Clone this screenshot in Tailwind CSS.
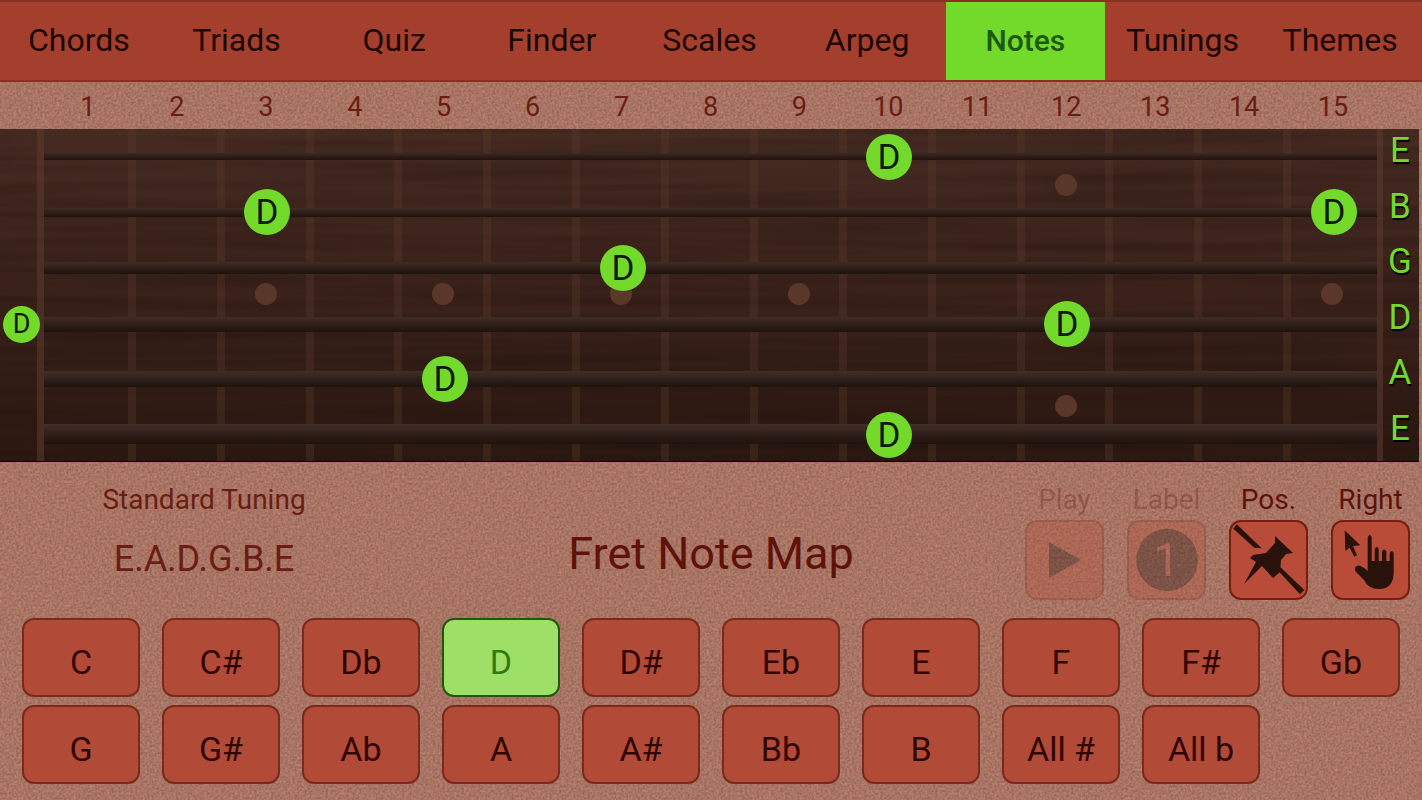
<!DOCTYPE html>
<html lang="en">
<head>
  <meta charset="UTF-8" />
  <title>Fret Note Map</title>
  <script src="https://cdn.jsdelivr.net/npm/@tailwindcss/browser@4"></script>
</head>
<body class="bg-[#a87464] font-['Roboto',sans-serif] text-[#5e120a]">
  <div class="relative w-[1422px] h-[800px] overflow-hidden">

    <!-- paper grain -->
    <svg class="absolute inset-0" width="1422" height="800">
      <filter id="grain" color-interpolation-filters="sRGB"><feTurbulence type="fractalNoise" baseFrequency="0.42" numOctaves="2" seed="4" /><feColorMatrix values="0.24 0 0 0 0.54  0.2 0 0 0 0.355  0.18 0 0 0 0.3  0 0 0 0 1" /></filter>
      <rect width="1422" height="800" filter="url(#grain)" />
    </svg>

    <div class="relative">
      <!-- top tabs -->
      <nav class="h-[82px] bg-[#a53f2d] border-y-2 border-[#8a3022] text-[32px] text-[#1c0703]">
        <div class="grid grid-cols-9 w-[1419px] text-center leading-[77px]">
          <div>Chords</div>
          <div>Triads</div>
          <div>Quiz</div>
          <div>Finder</div>
          <div>Scales</div>
          <div>Arpeg</div>
          <div class="h-[78px] mr-[-1px] bg-[#73d92b] font-medium text-[30px] text-[#1c5a0a]">Notes</div>
          <div>Tunings</div>
          <div>Themes</div>
        </div>
      </nav>

      <!-- fret numbers -->
      <div class="grid grid-cols-15 w-[1334px] ml-[43.5px] h-[47px] text-[27px] leading-[50px] text-center text-[#6a1d14]">
        <div>1</div><div>2</div><div>3</div><div>4</div><div>5</div><div>6</div><div>7</div><div>8</div><div>9</div><div>10</div><div>11</div><div>12</div><div>13</div><div>14</div><div>15</div>
      </div>

      <!-- fretboard -->
      <div class="relative h-[333px] w-[1419px] border-b border-black bg-linear-to-b from-[#452b22] via-[#3a221a] to-[#2b1811] overflow-hidden">
        <svg class="absolute inset-0" width="1419" height="333">
          <filter id="wood" color-interpolation-filters="sRGB"><feTurbulence type="fractalNoise" baseFrequency="0.003 0.09" numOctaves="2" seed="9" /><feColorMatrix values="0 0 0 0 0.08  0 0 0 0 0.03  0 0 0 0 0.02  0 0 0 0.5 -0.17" /></filter>
          <rect width="1419" height="333" filter="url(#wood)" />
        </svg>
        <div class="absolute left-[37px] top-0 bottom-0 w-[7px] bg-[#5a382c]/60"></div>
        <div class="absolute left-[1377px] top-0 bottom-0 w-[6px] bg-[#5a382c]/60"></div>

        <div class="absolute left-[47px] top-0 bottom-0 w-[1333px] grid grid-cols-15">
          <div class="border-r-8 border-[#5a382c]/35"></div><div class="border-r-8 border-[#5a382c]/35"></div><div class="border-r-8 border-[#5a382c]/35"></div>
          <div class="border-r-8 border-[#5a382c]/35"></div><div class="border-r-8 border-[#5a382c]/35"></div><div class="border-r-8 border-[#5a382c]/35"></div>
          <div class="border-r-8 border-[#5a382c]/35"></div><div class="border-r-8 border-[#5a382c]/35"></div><div class="border-r-8 border-[#5a382c]/35"></div>
          <div class="border-r-8 border-[#5a382c]/35"></div><div class="border-r-8 border-[#5a382c]/35"></div><div class="border-r-8 border-[#5a382c]/35"></div>
          <div class="border-r-8 border-[#5a382c]/35"></div><div class="border-r-8 border-[#5a382c]/35"></div><div></div>
        </div>

        <!-- inlays -->
        <div class="absolute left-[1055px] top-[45px] size-[22px] rounded-full bg-[#5b372a]"></div>
        <div class="absolute left-[255px] top-[154px] size-[22px] rounded-full bg-[#5b372a]"></div>
        <div class="absolute left-[432px] top-[154px] size-[22px] rounded-full bg-[#5b372a]"></div>
        <div class="absolute left-[610px] top-[154px] size-[22px] rounded-full bg-[#5b372a]"></div>
        <div class="absolute left-[788px] top-[154px] size-[22px] rounded-full bg-[#5b372a]"></div>
        <div class="absolute left-[1321px] top-[154px] size-[22px] rounded-full bg-[#5b372a]"></div>
        <div class="absolute left-[1055px] top-[266px] size-[22px] rounded-full bg-[#5b372a]"></div>

        <!-- strings -->
        <div class="absolute left-[44px] w-[1333px] top-[24px] h-[7px] bg-linear-to-b from-[#3c2a22] to-[#1f120d]"></div>
        <div class="absolute left-[44px] w-[1333px] top-[79px] h-[9px] bg-linear-to-b from-[#3f2c25] to-[#1f120d]"></div>
        <div class="absolute left-[44px] w-[1333px] top-[133px] h-[12px] bg-linear-to-b from-[#3f2c25] to-[#1f120d]"></div>
        <div class="absolute left-[44px] w-[1333px] top-[188px] h-[15px] bg-linear-to-b from-[#3f2c25] to-[#1f120d]"></div>
        <div class="absolute left-[44px] w-[1333px] top-[242px] h-[16px] bg-linear-to-b from-[#422e28] to-[#1f120d]"></div>
        <div class="absolute left-[44px] w-[1333px] top-[295px] h-[20px] bg-linear-to-b from-[#422e28] to-[#1f120d]"></div>

        <!-- notes -->
        <div class="absolute left-[866px] top-[5px] size-[46px] rounded-full bg-[#73d92b] text-[35px] leading-[47px] text-center text-[#0c1a04]">D</div>
        <div class="absolute left-[244px] top-[60px] size-[46px] rounded-full bg-[#73d92b] text-[35px] leading-[47px] text-center text-[#0c1a04]">D</div>
        <div class="absolute left-[1311px] top-[60px] size-[46px] rounded-full bg-[#73d92b] text-[35px] leading-[47px] text-center text-[#0c1a04]">D</div>
        <div class="absolute left-[600px] top-[116px] size-[46px] rounded-full bg-[#73d92b] text-[35px] leading-[47px] text-center text-[#0c1a04]">D</div>
        <div class="absolute left-[1044px] top-[172px] size-[46px] rounded-full bg-[#73d92b] text-[35px] leading-[47px] text-center text-[#0c1a04]">D</div>
        <div class="absolute left-[422px] top-[227px] size-[46px] rounded-full bg-[#73d92b] text-[35px] leading-[47px] text-center text-[#0c1a04]">D</div>
        <div class="absolute left-[866px] top-[283px] size-[46px] rounded-full bg-[#73d92b] text-[35px] leading-[47px] text-center text-[#0c1a04]">D</div>
        <div class="absolute left-[3px] top-[177px] size-[37px] rounded-full bg-[#73d92b] text-[27px] leading-[37px] text-center text-[#0c1a04]">D</div>

        <!-- open string names -->
        <div class="absolute left-[1382px] top-[-6px] w-[36px] text-center text-[35px] leading-[55.5px] text-[#73d92b] [text-shadow:1px_2px_1px_#000]">
          <div>E</div><div>B</div><div>G</div><div>D</div><div>A</div><div>E</div>
        </div>
      </div>

      <!-- info row -->
      <div class="flex h-[156px]">
        <div class="w-[408px] text-center text-[#6a1d14]">
          <div class="text-[28px] leading-[30px] mt-[23px]">Standard Tuning</div>
          <div class="text-[36px] leading-[40px] mt-[24px]">E.A.D.G.B.E</div>
        </div>
        <div class="w-[606px] text-center text-[45px] leading-[50px] mt-[67px]">Fret Note Map</div>
        <div class="flex pl-[11px] gap-[23px] mt-[22px]">
          <div class="w-[79px] text-center opacity-30">
            <div class="text-[28px] leading-[32px]">Play</div>
            <div class="mt-[4px] h-[80px] rounded-[12px] border-2 border-[#7a2a1c] bg-[#b84c38] flex items-center justify-center">
              <svg width="32" height="36" viewBox="0 0 32 36"><path d="M0 0L32 18L0 36Z" fill="#180805" /></svg>
            </div>
          </div>
          <div class="w-[79px] text-center opacity-30">
            <div class="text-[28px] leading-[32px]">Label</div>
            <div class="mt-[4px] h-[80px] rounded-[12px] border-2 border-[#7a2a1c] bg-[#b84c38] flex items-center justify-center">
              <div class="size-[62px] rounded-full bg-[#180805] text-[#b84c38] text-[46px] leading-[62px]">1</div>
            </div>
          </div>
          <div class="w-[79px] text-center">
            <div class="text-[28px] leading-[32px]">Pos.</div>
            <div class="mt-[4px] h-[80px] rounded-[12px] border-2 border-[#7a1c10] bg-[#b84c38]">
              <svg width="75" height="76" viewBox="0 0 75 76" fill="#2a120c">
                <path d="M5.7 2.3L2.3 6.7L23.3 25.7L30.7 26.3Z" />
                <path d="M49 44.7L49 50.7L69 72.3L73.3 68Z" />
                <path d="M44 14L62 31L55 32L50 38L49 50L42 56L31 44L13 62L25 40L19 36L22 33L35 31L44 21Z" />
              </svg>
            </div>
          </div>
          <div class="w-[79px] text-center">
            <div class="text-[28px] leading-[32px]">Right</div>
            <div class="mt-[4px] h-[80px] rounded-[12px] border-2 border-[#7a1c10] bg-[#b84c38]">
              <svg width="75" height="76" viewBox="0 0 75 76" fill="#2a120c">
                <path d="M11.7 8.3L27.3 23.3L20 24L24 33.3L21.3 34.7L16.7 25.7L12.3 29Z" />
                <path d="M34.7 15Q36.7 11 38.7 15L38.7 39L41.7 39L41.7 27Q43.7 23 45.7 27L45.7 39L49 39L49 29.5Q51 25.5 53.3 29.5L53.3 39L56.7 39L56.7 31Q58.7 27 60.7 31L60.7 50Q60.7 67 46 67Q35 67 31 58L23 50Q20 45 25 43.5Q29 43.5 34.7 49Z" />
              </svg>
            </div>
          </div>
        </div>
      </div>

      <!-- note buttons -->
      <div class="grid grid-cols-[repeat(10,118px)] gap-x-[22px] gap-y-[8px] pl-[22px] text-[34px] leading-[84px] text-center text-[#300602]">
        <div class="h-[79px] rounded-[12px] border-2 border-[#7a2a1c] bg-[#b24a38]">C</div>
        <div class="h-[79px] rounded-[12px] border-2 border-[#7a2a1c] bg-[#b24a38]">C#</div>
        <div class="h-[79px] rounded-[12px] border-2 border-[#7a2a1c] bg-[#b24a38]">Db</div>
        <div class="h-[79px] rounded-[12px] border-2 border-[#1d5a0c] bg-[#9ee067] text-[#2f7a10]">D</div>
        <div class="h-[79px] rounded-[12px] border-2 border-[#7a2a1c] bg-[#b24a38]">D#</div>
        <div class="h-[79px] rounded-[12px] border-2 border-[#7a2a1c] bg-[#b24a38]">Eb</div>
        <div class="h-[79px] rounded-[12px] border-2 border-[#7a2a1c] bg-[#b24a38]">E</div>
        <div class="h-[79px] rounded-[12px] border-2 border-[#7a2a1c] bg-[#b24a38]">F</div>
        <div class="h-[79px] rounded-[12px] border-2 border-[#7a2a1c] bg-[#b24a38]">F#</div>
        <div class="h-[79px] rounded-[12px] border-2 border-[#7a2a1c] bg-[#b24a38]">Gb</div>
        <div class="h-[79px] rounded-[12px] border-2 border-[#7a2a1c] bg-[#b24a38]">G</div>
        <div class="h-[79px] rounded-[12px] border-2 border-[#7a2a1c] bg-[#b24a38]">G#</div>
        <div class="h-[79px] rounded-[12px] border-2 border-[#7a2a1c] bg-[#b24a38]">Ab</div>
        <div class="h-[79px] rounded-[12px] border-2 border-[#7a2a1c] bg-[#b24a38]">A</div>
        <div class="h-[79px] rounded-[12px] border-2 border-[#7a2a1c] bg-[#b24a38]">A#</div>
        <div class="h-[79px] rounded-[12px] border-2 border-[#7a2a1c] bg-[#b24a38]">Bb</div>
        <div class="h-[79px] rounded-[12px] border-2 border-[#7a2a1c] bg-[#b24a38]">B</div>
        <div class="h-[79px] rounded-[12px] border-2 border-[#7a2a1c] bg-[#b24a38]">All #</div>
        <div class="h-[79px] rounded-[12px] border-2 border-[#7a2a1c] bg-[#b24a38]">All b</div>
      </div>
    </div>
  </div>
</body>
</html>
